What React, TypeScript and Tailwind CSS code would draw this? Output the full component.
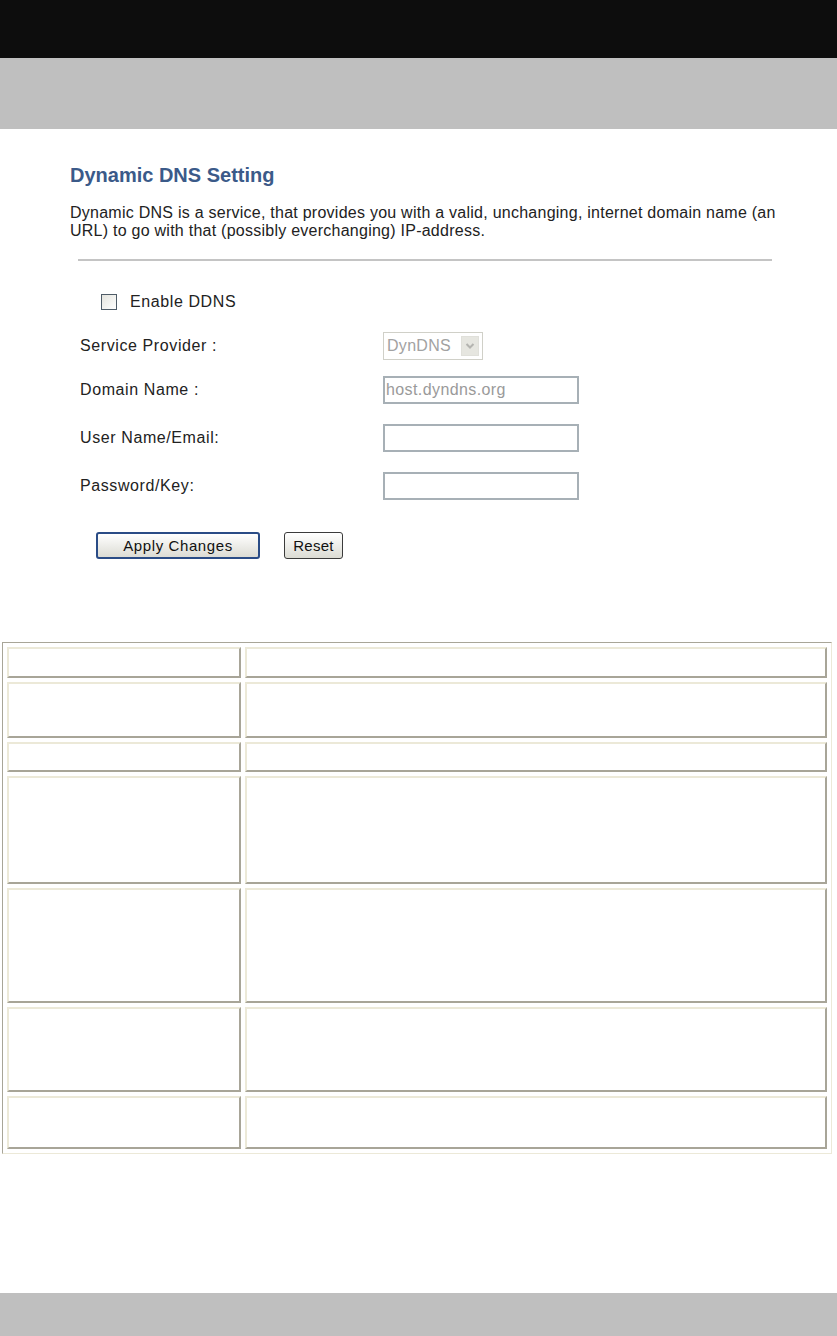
import * as React from "react"

const rows: { h: string }[] = [
  { h: "h-[31px]" },
  { h: "h-[56px]" },
  { h: "h-[30px]" },
  { h: "h-[108px]" },
  { h: "h-[115px]" },
  { h: "h-[85px]" },
  { h: "h-[53px]" },
]

const cell =
  "border-t-2 border-l-2 border-r-2 border-b-2 border-t-[#ece9d8] border-l-[#ece9d8] border-r-[#a8a598] border-b-[#a8a598] bg-white"

const Field = ({ label, className, children }: { label: string; className: string; children?: React.ReactNode }) => (
  <div className={`flex items-center ${className}`}>
    <div className="w-[313px] shrink-0 pl-[10px]">{label}</div>
    {children}
  </div>
)

const TextBox = ({ value }: { value?: string }) => (
  <div className="w-[196px] h-[28px] border-2 border-[#a7b0b6] bg-white flex items-center px-[1px] text-[16px] tracking-[0.4px] text-[#9a9a9a]">
    {value}
  </div>
)

export default function App() {
  return (
    <div className="bg-white text-[#222] font-['Liberation_Sans',Arial,sans-serif]">
      <div className="h-[58px] bg-[#0d0d0d]"></div>
      <div className="h-[71px] bg-[#bfbfbf]"></div>

      <section className="pl-[70px] pt-[35px]">
        <h1 className="text-[20px] leading-[22px] font-bold text-[#3b5a89]">Dynamic DNS Setting</h1>
        <p className="mt-[18px] text-[16px] leading-[18px] tracking-[0.25px] text-[#222]">
          Dynamic DNS is a service, that provides you with a valid, unchanging, internet domain name (an
          <br />
          URL) to go with that (possibly everchanging) IP-address.
        </p>
        <div className="ml-[8px] mt-[19px] w-[694px] h-[2px] bg-[#c4c4c4]"></div>

        <div className="text-[16px] leading-[18px] tracking-[0.6px]">
          {/* Enable checkbox */}
          <div className="flex items-center h-[24px] mt-[29px] pl-[31px]">
            <span className="w-[16px] h-[16px] border border-[#4f5c68] bg-linear-to-br from-[#e4e4de] to-white"></span>
            <span className="ml-[13px]">Enable DDNS</span>
          </div>

          <Field label="Service Provider :" className="h-[28px] mt-[18px]">
            <div className="w-[100px] h-[28px] border border-[#d0d0c8] bg-white flex items-center justify-between pl-[3px] pr-[3px]">
              <span className="text-[#a2a2a2] tracking-[0.3px]">DynDNS</span>
              <span className="w-[18px] h-[20px] bg-[#e6e6e0] border border-[#e0e0da] flex items-center justify-center">
                <svg width="10" height="8" viewBox="0 0 10 8">
                  <path d="M1.5 2 L5 5.5 L8.5 2" fill="none" stroke="#b4b4b0" strokeWidth="2" />
                </svg>
              </span>
            </div>
          </Field>

          <Field label="Domain Name :" className="h-[28px] mt-[16px]">
            <TextBox value="host.dyndns.org" />
          </Field>

          <Field label="User Name/Email:" className="h-[28px] mt-[20px]">
            <TextBox />
          </Field>

          <Field label="Password/Key:" className="h-[28px] mt-[20px]">
            <TextBox />
          </Field>

          {/* Buttons */}
          <div className="flex items-center mt-[32px] pl-[26px] gap-[24px]">
            <button className="w-[164px] h-[27px] rounded-[3px] border-2 border-[#2a4c86] bg-linear-to-b from-white to-[#dcdcd4] text-[15px] tracking-[0.6px] text-[#111]">
              Apply Changes
            </button>
            <button className="w-[59px] h-[27px] rounded-[3px] border border-[#3b3b3b] bg-linear-to-b from-white to-[#dcdcd4] text-[15px] tracking-[0.3px] text-[#111]">
              Reset
            </button>
          </div>
        </div>
      </section>

      {/* Table */}
      <div className="mt-[83px] ml-[2px] w-[830px] border border-t-[#a8a598] border-l-[#a8a598] border-r-[#ece9d8] border-b-[#ece9d8] p-[4px]">
        <div className="grid grid-cols-[234px_582px] gap-[4px]">
          {rows.map((r, i) => (
            <React.Fragment key={i}>
              <div className={`${cell} ${r.h}`}></div>
              <div className={`${cell} ${r.h}`}></div>
            </React.Fragment>
          ))}
        </div>
      </div>

      <div className="mt-[139px] h-[43px] bg-[#bfbfbf]"></div>
    </div>
  )
}
